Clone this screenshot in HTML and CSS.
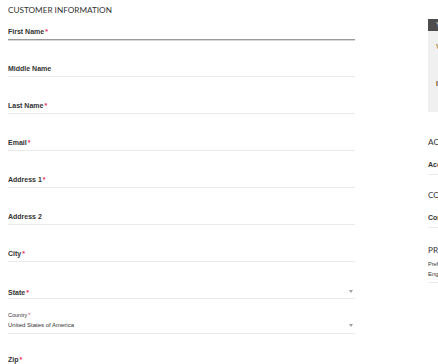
FILE: index.html
```html
<!DOCTYPE html>
<html lang="en">
<head>
    <meta charset="UTF-8">
    <meta name="viewport" content="width=device-width, initial-scale=1.0">
    <title>Checkout - Customer Information</title>
    <link rel="stylesheet" href="styles.css">
</head>
<body>
    <div class="page">
        <!-- Левая колонка: данные покупателя -->
        <section class="customer">
            <h2 class="section-title">Customer Information</h2>
            <div class="field field-active"><label>First Name<span class="req">*</span></label></div>
            <div class="field"><label>Middle Name</label></div>
            <div class="field"><label>Last Name<span class="req">*</span></label></div>
            <div class="field"><label>Email<span class="req">*</span></label></div>
            <div class="field"><label>Address 1<span class="req">*</span></label></div>
            <div class="field"><label>Address 2</label></div>
            <div class="field"><label>City<span class="req">*</span></label></div>
            <div class="field field-select"><label>State<span class="req">*</span></label><span class="arrow"></span></div>
            <div class="field field-country">
                <div class="small-label">Country<span class="req">*</span></div>
                <div class="select-value">United States of America</div>
                <span class="arrow"></span>
            </div>
            <div class="field field-zip"><label>Zip<span class="req">*</span></label></div>
        </section>

        <!-- Правая колонка -->
        <aside class="sidebar">
            <div class="cart-box">
                <div class="cart-head">Your Order</div>
                <div class="cart-body">
                    <p class="cart-line">View Cart</p>
                    <p class="cart-line cart-total">Items Total</p>
                </div>
            </div>

            <h2 class="section-title side-title side-first">Account Information</h2>
            <div class="field side-field"><label>Account Type</label></div>

            <h2 class="section-title side-title side-contact">Contact Preferences</h2>
            <div class="field side-field"><label>Contact Me By</label></div>

            <h2 class="section-title side-title side-prefs">Preferences</h2>
            <div class="field side-pref">
                <div class="small-label">Preferred Language</div>
                <div class="select-value">English</div>
            </div>
        </aside>
    </div>
</body>
</html>
```

FILE: styles.css
```css
/* Общие стили */
html, body {
    overflow: hidden;
}

body {
    margin: 0;
    background-color: #fff;
    color: #333;
    font-family: 'Liberation Sans', Arial, sans-serif;
}

.page {
    display: flex;
    gap: 73px;
    padding: 0 8px;
    width: 700px;
}

.customer {
    width: 347px;
    flex-shrink: 0;
}

.section-title {
    margin: 0;
    padding-top: 4px;
    height: 14px;
    font-family: 'Lato', sans-serif;
    font-weight: 400;
    font-size: 8.2px;
    line-height: 12px;
    text-transform: uppercase;
    color: #333;
}

/* Поля формы */
.field {
    position: relative;
    display: flex;
    flex-direction: column;
    justify-content: flex-end;
    box-sizing: border-box;
    height: 37px;
    padding-bottom: 2px;
    border-bottom: 1px solid #ebebeb;
}

.field label {
    display: block;
    font-size: 7px;
    font-weight: bold;
    line-height: 10px;
    color: #333;
}

.req {
    color: #e8315b;
    margin-left: 1px;
}

.field-active {
    height: 22px;
    border-bottom: 1px solid #9a9a9a;
    box-shadow: 0 1px 0 #d8d8d8;
}

.field-select {
    padding-bottom: 0;
}

.field-country {
    height: 35px;
    padding-bottom: 3px;
}

.field-zip {
    height: 34px;
}

.small-label {
    font-size: 5.5px;
    line-height: 8px;
    color: #333;
}

.select-value {
    font-size: 6px;
    line-height: 9px;
    color: #333;
    margin-top: 2px;
}

.arrow {
    position: absolute;
    right: 2px;
    bottom: 5px;
    width: 0;
    height: 0;
    border-left: 2.5px solid transparent;
    border-right: 2.5px solid transparent;
    border-top: 3px solid #a0a0a0;
}

.field-country .arrow {
    bottom: 6px;
}

/* Правая колонка */
.sidebar {
    width: 220px;
    flex-shrink: 0;
}

.cart-box {
    margin-top: 19px;
    background-color: #f0f0f0;
}

.cart-head {
    height: 12px;
    background-color: #4d4d4d;
    color: #fff;
    font-size: 7px;
    line-height: 12px;
    padding-left: 8px;
}

.cart-body {
    height: 81px;
    padding: 0 8px;
    box-sizing: border-box;
}

.cart-line {
    margin: 0;
    padding-top: 11px;
    font-size: 7px;
    line-height: 9px;
    font-weight: bold;
    color: #a67c3d;
}

.cart-total {
    padding-top: 28px;
    color: #6b4a1a;
}

.side-first {
    margin-top: 20px;
}

.side-contact {
    margin-top: 10px;
}

.side-prefs {
    margin-top: 12px;
}

.side-field {
    height: 25px;
    padding-bottom: 4px;
}

.side-pref {
    height: 25px;
    padding-bottom: 3px;
}
```
